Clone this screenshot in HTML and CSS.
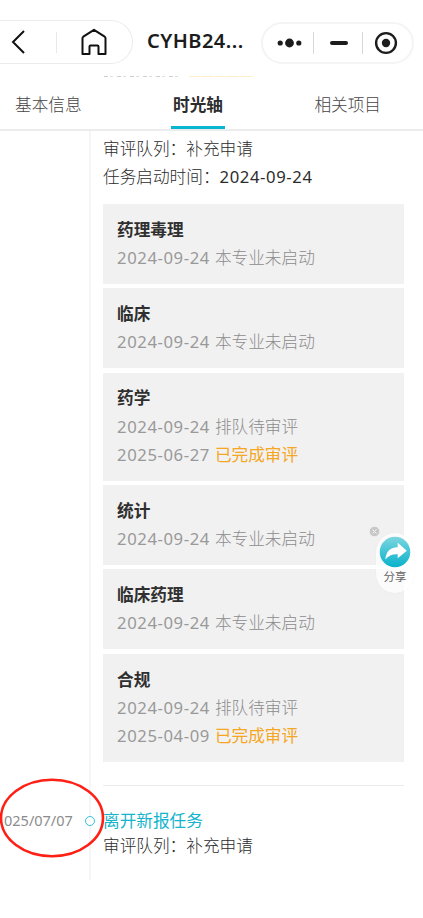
FILE: index.html
```
<!DOCTYPE html>
<html lang="zh-CN">
<head>
    <meta charset="UTF-8">
    <meta name="viewport" content="width=device-width, initial-scale=1.0">
    <title>时光轴</title>
    <link rel="stylesheet" href="styles.css">
</head>
<body>
    <header class="navbar">
        <div class="nav-left">
            <svg class="icon-back" width="14" height="24" viewBox="0 0 14 24"><path d="M13 1 2 12l11 11" /></svg>
            <span class="nav-line"></span>
            <svg class="icon-home" width="28" height="28" viewBox="0 0 28 28"><path d="M2.500 10.200Q2.500 9.300 3.300 8.700L14 1.800 24.700 8.700Q25.500 9.300 25.500 10.200V26H18.500V18.500Q18.500 17.500 17.500 17.500H10.500Q9.500 17.500 9.500 18.500V26H2.500Z" /></svg>
        </div>
        <h1 class="nav-title">CYHB24...</h1>
        <div class="capsule">
            <svg width="26" height="12" viewBox="0 0 26 12"><circle cx="3.2" cy="6" r="2.6" /><circle cx="12.5" cy="6" r="4.4" /><circle cx="21.8" cy="6" r="2.6" /></svg>
            <span class="capsule-line"></span>
            <span class="minus"></span>
            <span class="capsule-line"></span>
            <svg width="24" height="24" viewBox="0 0 24 24"><circle class="ring" cx="12" cy="12" r="9.9" /><circle cx="12" cy="12" r="4.2" /></svg>
        </div>
    </header>

    <!-- 滚动到导航下方的内容边缘 -->
    <div class="peek">
        <span class="peek-text"></span>
        <span class="peek-done"></span>
    </div>

    <nav class="tabs">
        <a class="tab">基本信息</a>
        <a class="tab active">时光轴</a>
        <a class="tab">相关项目</a>
    </nav>

    <main class="timeline">
        <section class="entry">
            <div class="entry-date"></div>
            <div class="entry-body">
                <p>审评队列：补充申请</p>
                <p>任务启动时间：<span class="num">2024-09-24</span></p>
                <div class="cards">
                    <div class="card">
                        <h3>药理毒理</h3>
                        <p><span class="num">2024-09-24</span> 本专业未启动</p>
                    </div>
                    <div class="card">
                        <h3>临床</h3>
                        <p><span class="num">2024-09-24</span> 本专业未启动</p>
                    </div>
                    <div class="card">
                        <h3>药学</h3>
                        <p><span class="num">2024-09-24</span> 排队待审评</p>
                        <p><span class="num">2025-06-27</span> <span class="done">已完成审评</span></p>
                    </div>
                    <div class="card">
                        <h3>统计</h3>
                        <p><span class="num">2024-09-24</span> 本专业未启动</p>
                    </div>
                    <div class="card">
                        <h3>临床药理</h3>
                        <p><span class="num">2024-09-24</span> 本专业未启动</p>
                    </div>
                    <div class="card">
                        <h3>合规</h3>
                        <p><span class="num">2024-09-24</span> 排队待审评</p>
                        <p><span class="num">2025-04-09</span> <span class="done">已完成审评</span></p>
                    </div>
                </div>
            </div>
        </section>
        <section class="entry entry-end">
            <div class="entry-date">025/07/07<span class="dot"></span></div>
            <div class="entry-body">
                <h2>离开新报任务</h2>
                <p>审评队列：补充申请</p>
            </div>
        </section>
    </main>

    <!-- 分享悬浮按钮 -->
    <div class="share">
        <svg class="share-icon" width="32" height="32" viewBox="0 0 32 32">
            <defs>
                <linearGradient id="shareBg" x1="0" y1="0" x2="0" y2="1">
                    <stop offset="0" stop-color="#7dd6e0" />
                    <stop offset="1" stop-color="#08b2cb" />
                </linearGradient>
            </defs>
            <circle cx="16" cy="16" r="15.3" fill="url(#shareBg)" />
            <path d="M6.300 23.500C7 15.500 11.500 11.300 18.700 11.300V6.800L27.800 14.700 18.700 22.300V18.300C13.500 17.800 10 19.300 6.300 23.500Z" fill="#fff" />
        </svg>
        <span>分享</span>
    </div>
    <svg class="share-close" width="11" height="11" viewBox="0 0 11 11"><circle cx="5.5" cy="5.5" r="5.3" /><path d="m3.500 3.500 4 4m0-4-4 4" /></svg>

    <!-- 日期标注 -->
    <svg class="mark" width="108" height="82" viewBox="0 0 108 82"><ellipse cx="53" cy="41" rx="51" ry="38.200" /></svg>
</body>
</html>
```
FILE: styles.css
```
* {
    box-sizing: border-box;
}
body {
    position: relative;
    margin: 0;
    height: 918px;
    overflow: hidden;
    background-color: #fff;
    color: #2c2c2c;
    font-family: "Noto Sans", "Noto Sans CJK SC", sans-serif;
    font-size: 16.67px;
    font-weight: 300;
}
h1, h2, h3, p {
    margin: 0;
}
svg {
    display: block;
    flex: none;
}

/* 顶部导航 */
.navbar {
    display: flex;
    align-items: flex-start;
    height: 76px;
    padding-top: 20px;
}
.nav-left {
    display: flex;
    align-items: center;
    width: 134px;
    height: 44px;
    padding-left: 12px;
    margin-left: -1px;
    border: 1px solid #ececec;
    border-left: none;
    border-radius: 0 22px 22px 0;
}
.icon-back, .icon-home {
    fill: none;
    stroke: #111;
    stroke-width: 2;
}
.icon-home {
    margin-left: 23px;
    stroke-linejoin: round;
}
.nav-line {
    width: 1px;
    height: 21px;
    margin-left: 31px;
    background-color: #e8e8e8;
}
.nav-title {
    width: 114px;
    padding-left: 14px;
    color: #1c1c1c;
    font-size: 20px;
    font-weight: 600;
    letter-spacing: 0.45px;
    line-height: 42px;
    white-space: nowrap;
}
.capsule {
    display: flex;
    align-items: center;
    width: 153px;
    height: 42px;
    margin: 2px 0 0 14px;
    padding-left: 14px;
    border: 2px solid #f4f4f4;
    border-radius: 21px;
    fill: #1c1c1c;
}
.ring {
    fill: none;
    stroke: #1c1c1c;
    stroke-width: 2.4;
}
.capsule-line {
    width: 1px;
    height: 22px;
    margin: 0 11px 0 10px;
    background-color: #d8d8d8;
}
.minus {
    width: 18px;
    height: 4px;
    margin: 0 4px 0 5px;
    border-radius: 2px;
    background-color: #1c1c1c;
}

.peek {
    display: flex;
    gap: 10px;
    height: 1px;
    padding-left: 104px;
}
.peek-text {
    width: 75px;
    background: repeating-linear-gradient(90deg, #cfcfcf 0 4px, #fff 4px 6px, #dedede 6px 9px, #fff 9px 13px);
}
.peek-done {
    width: 64px;
    background: repeating-linear-gradient(90deg, #ffedc4 0 10px, #fff6e0 10px 13px);
}

/* 标签页 */
.tabs {
    display: flex;
    justify-content: space-between;
    height: 54px;
    padding: 0 42px 0 15px;
    border-bottom: 2px solid #ececec;
    color: #444;
    line-height: 55px;
}
.tab {
    height: 52px;
}
.active {
    position: relative;
    right: 12px;
    padding: 0 2px;
    margin-left: 24px;
    border-bottom: 3px solid #08b6cf;
    color: #2c2c2c;
    font-weight: 700;
}

/* 时间轴 */
.entry {
    display: flex;
    line-height: 28.13px;
}
.entry-date {
    position: relative;
    flex: none;
    width: 91px;
    padding-left: 4px;
    border-right: 2px solid #f6f6f6;
    color: #8c8c8c;
    font-size: 14.5px;
    font-weight: 400;
    white-space: nowrap;
}
.entry-body {
    width: 301px;
    margin-left: 12px;
    padding-top: 4px;
    white-space: nowrap;
}
.entry:first-child .entry-body {
    height: 655px;
    border-bottom: 1px solid #ececec;
}
.num {
    font-weight: 400;
    letter-spacing: 0.6px;
}
.cards {
    display: flex;
    flex-direction: column;
    gap: 4.3px;
    margin-top: 12.7px;
}
.card {
    padding: 11.9px 14px;
    background-color: #f1f1f1;
    color: #8c8c8c;
}
.card .num {
    color: #999;
}
.card h3 {
    color: #2f2f2f;
    font-size: 16.67px;
    font-weight: 700;
}
.card p {
    word-spacing: 0.6px;
}
.card .done {
    color: #f5a623;
    font-weight: 400;
}
.entry-end {
    height: 94px;
    line-height: 25px;
}
.entry-end .entry-date {
    padding-top: 21.5px;
}
.entry-end .entry-body {
    padding-top: 22px;
}
.entry-end h2 {
    color: #14b4cc;
    font-size: 16.67px;
    font-weight: 400;
}
.dot {
    position: absolute;
    top: 30px;
    right: -6px;
    width: 10px;
    height: 10px;
    border: 1.5px solid #35c1d5;
    border-radius: 50%;
    background-color: #fff;
}

/* 悬浮元素 */
.share {
    position: absolute;
    top: 533px;
    left: 376px;
    display: flex;
    flex-direction: column;
    align-items: center;
    width: 38px;
    height: 60px;
    padding-top: 3px;
    border-radius: 19px;
    background-color: rgba(255, 255, 255, 0.7);
    box-shadow: 0 0 2px rgba(0, 0, 0, 0.06);
    color: #666;
    font-size: 11.5px;
    font-weight: 400;
    line-height: 17px;
}
.share-close {
    position: absolute;
    top: 526px;
    left: 369px;
    fill: #c8c8c8;
    stroke: #f1f1f1;
}
.mark {
    position: absolute;
    top: 777px;
    left: -1px;
    fill: none;
    stroke: #ff2015;
    stroke-width: 2.6;
}
```
